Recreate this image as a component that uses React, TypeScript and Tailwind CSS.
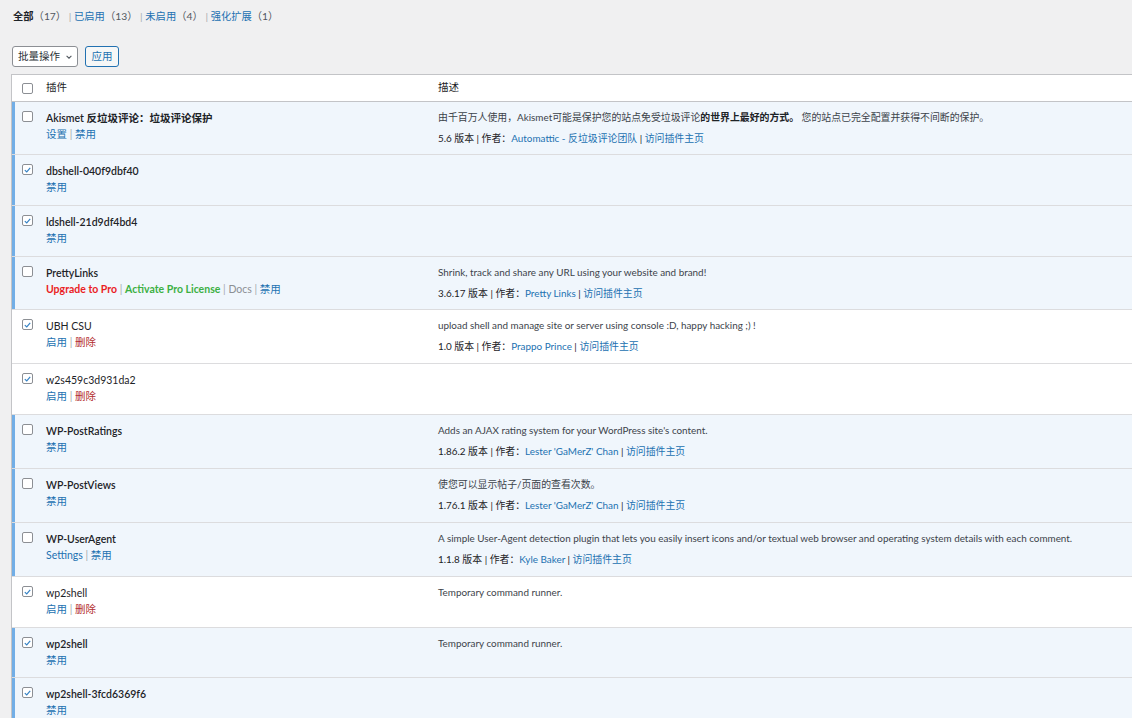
import React from "react";

type Action = { label: string; tone?: "link" | "danger" | "upgrade" | "license" | "muted" };

type Plugin = {
  name: string;
  active: boolean;
  checked: boolean;
  actions: Action[];
  desc?: React.ReactNode;
  version?: string;
  author?: string;
  height: string;
};

const plugins: Plugin[] = [
  {
    name: "Akismet 反垃圾评论：垃圾评论保护",
    active: true,
    checked: false,
    actions: [{ label: "设置" }, { label: "禁用" }],
    desc: (
      <>
        由千百万人使用，Akismet可能是保护您的站点免受垃圾评论
        <strong className="font-bold text-[#1d2327]">的世界上最好的方式。</strong> 您的站点已完全配置并获得不间断的保护。
      </>
    ),
    version: "5.6",
    author: "Automattic - 反垃圾评论团队",
    height: "h-[53px]",
  },
  { name: "dbshell-040f9dbf40", active: true, checked: true, actions: [{ label: "禁用" }], height: "h-[51px]" },
  { name: "ldshell-21d9df4bd4", active: true, checked: true, actions: [{ label: "禁用" }], height: "h-[51px]" },
  {
    name: "PrettyLinks",
    active: true,
    checked: false,
    actions: [
      { label: "Upgrade to Pro", tone: "upgrade" },
      { label: "Activate Pro License", tone: "license" },
      { label: "Docs", tone: "muted" },
      { label: "禁用" },
    ],
    desc: "Shrink, track and share any URL using your website and brand!",
    version: "3.6.17",
    author: "Pretty Links",
    height: "h-[53px]",
  },
  {
    name: "UBH CSU",
    active: false,
    checked: true,
    actions: [{ label: "启用" }, { label: "删除", tone: "danger" }],
    desc: "upload shell and manage site or server using console :D, happy hacking ;) !",
    version: "1.0",
    author: "Prappo Prince",
    height: "h-[54px]",
  },
  {
    name: "w2s459c3d931da2",
    active: false,
    checked: true,
    actions: [{ label: "启用" }, { label: "删除", tone: "danger" }],
    height: "h-[51px]",
  },
  {
    name: "WP-PostRatings",
    active: true,
    checked: false,
    actions: [{ label: "禁用" }],
    desc: "Adds an AJAX rating system for your WordPress site's content.",
    version: "1.86.2",
    author: "Lester 'GaMerZ' Chan",
    height: "h-[54px]",
  },
  {
    name: "WP-PostViews",
    active: true,
    checked: false,
    actions: [{ label: "禁用" }],
    desc: "使您可以显示帖子/页面的查看次数。",
    version: "1.76.1",
    author: "Lester 'GaMerZ' Chan",
    height: "h-[54px]",
  },
  {
    name: "WP-UserAgent",
    active: true,
    checked: false,
    actions: [{ label: "Settings" }, { label: "禁用" }],
    desc: "A simple User-Agent detection plugin that lets you easily insert icons and/or textual web browser and operating system details with each comment.",
    version: "1.1.8",
    author: "Kyle Baker",
    height: "h-[54px]",
  },
  {
    name: "wp2shell",
    active: false,
    checked: true,
    actions: [{ label: "启用" }, { label: "删除", tone: "danger" }],
    desc: "Temporary command runner.",
    height: "h-[51px]",
  },
  {
    name: "wp2shell",
    active: true,
    checked: true,
    actions: [{ label: "禁用" }],
    desc: "Temporary command runner.",
    height: "h-[50px]",
  },
  { name: "wp2shell-3fcd6369f6", active: true, checked: true, actions: [{ label: "禁用" }], height: "h-[51px]" },
];

const toneClass = {
  link: "text-[#2271b1]",
  danger: "text-[#b32d2e]",
  upgrade: "text-[#ea1c24] font-bold",
  license: "text-[#3cb043] font-bold",
  muted: "text-[#8c8f94]",
};

const Checkbox = ({ checked }: { checked: boolean }) => (
  <span className="flex h-[11px] w-[11px] items-center justify-center rounded-[2px] border border-[#8c8f94] bg-white">
    {checked ? (
      <svg viewBox="0 0 12 12" className="h-[10px] w-[10px]">
        <path d="M2.4 6.2 L5 8.6 L9.6 3.2" fill="none" stroke="#3582c4" strokeWidth="1.6" />
      </svg>
    ) : null}
  </span>
);

const Row = ({ p }: { p: Plugin }) => (
  <div
    className={`flex ${p.height} border-b border-[#dcdcde] ${p.active ? "bg-[#f0f6fc]" : "bg-white"}`}
  >
    <div
      className={`w-[34px] shrink-0 border-l-[3px] pl-[7px] pt-[9px] ${
        p.active ? "border-[#72aee6]" : "border-transparent"
      }`}
    >
      <Checkbox checked={p.checked} />
    </div>
    <div className="w-[392px] shrink-0 pt-[9px] text-[10.5px] leading-[15px]">
      <div className={`text-[#1d2327] ${p.active ? "font-semibold" : ""}`}>{p.name}</div>
      <div className="mt-[1px]">
        {p.actions.map((a, i) => (
          <span key={i}>
            {i > 0 ? <span className="text-[#a7aaad]"> | </span> : null}
            <span className={toneClass[a.tone ?? "link"]}>{a.label}</span>
          </span>
        ))}
      </div>
    </div>
    <div className="flex-1 pt-[8px] text-[9.9px] leading-[15px] text-[#3c434a]">
      {p.desc ? <div>{p.desc}</div> : null}
      {p.version ? (
        <div className="mt-[6px] text-[#1d2327]">
          {p.version} 版本 | 作者：<span className="text-[#2271b1]">{p.author}</span> |{" "}
          <span className="text-[#2271b1]">访问插件主页</span>
        </div>
      ) : null}
    </div>
  </div>
);

const filters = [
  { label: "全部", count: "（17）", current: true },
  { label: "已启用", count: "（13）" },
  { label: "未启用", count: "（4）" },
  { label: "强化扩展", count: "（1）" },
];

export default function App() {
  return (
    <div className="h-[718px] overflow-hidden bg-[#f0f0f1] font-['Lato','Noto_Sans_CJK_SC',sans-serif] text-[10px] text-[#3c434a]">
      <div className="flex h-[33px] items-center pl-[13px] text-[10.3px] leading-[15px]">
        {filters.map((f, i) => (
          <span key={f.label} className="whitespace-pre">
            {i > 0 ? <span className="text-[#a7aaad]"> | </span> : null}
            <span className={f.current ? "font-bold text-[#1d2327]" : "text-[#2271b1]"}>{f.label}</span>
            <span className="text-[#50575e]">{f.count}</span>
          </span>
        ))}
      </div>

      <div className="mt-[13px] flex items-center gap-[7px] pl-[12px] text-[10.5px]">
        <div className="flex h-[21px] w-[66px] items-center justify-between rounded-[3px] border border-[#8c8f94] bg-white pl-[5px] pr-[4px] text-[#2c3338]">
          <span>批量操作</span>
          <svg viewBox="0 0 10 10" className="h-[8px] w-[8px]">
            <path d="M2 3.5 L5 6.5 L8 3.5" fill="none" stroke="#50575e" strokeWidth="1.3" />
          </svg>
        </div>
        <div className="flex h-[21px] w-[34px] items-center justify-center rounded-[3px] border border-[#2271b1] bg-[#f6f7f7] text-[#2271b1]">
          应用
        </div>
      </div>

      <div className="ml-[11px] mr-[-4px] mt-[7px] border border-[#c3c4c7] bg-white">
        <div className="flex h-[27px] items-center border-b border-[#c3c4c7] text-[10.5px] text-[#1d2327]">
          <div className="w-[34px] shrink-0 pl-[10px]">
            <Checkbox checked={false} />
          </div>
          <div className="w-[392px] shrink-0">插件</div>
          <div className="flex-1">描述</div>
        </div>
        {plugins.map((p, i) => (
          <Row key={i} p={p} />
        ))}
      </div>
    </div>
  );
}
